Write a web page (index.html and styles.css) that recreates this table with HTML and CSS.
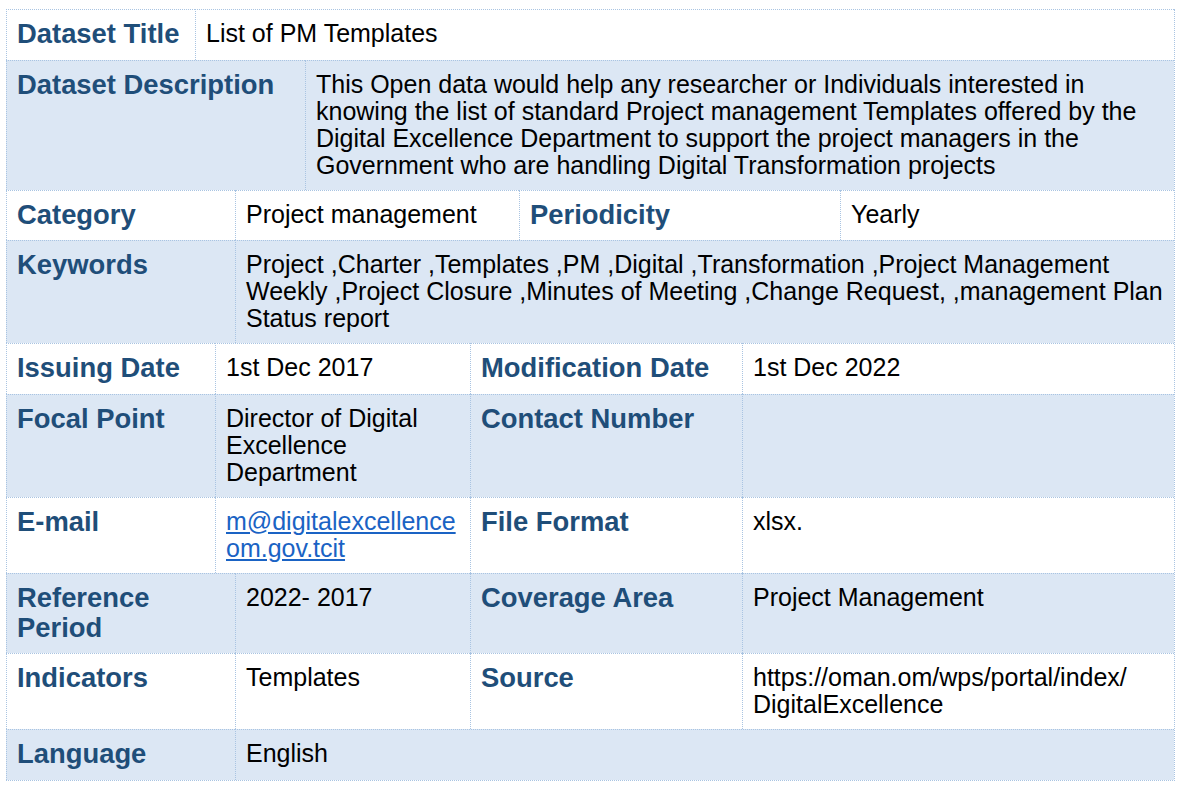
FILE: index.html
```html
<!DOCTYPE html>
<html lang="en">
<head>
<meta charset="utf-8">
<title>List of PM Templates</title>
<link rel="stylesheet" href="styles.css">
</head>
<body>
<div class="sheet">
  <div class="row r-title">
    <div class="cell label">Dataset Title</div>
    <div class="cell value">List of PM Templates</div>
  </div>
  <div class="row r-desc alt">
    <div class="cell label">Dataset Description</div>
    <div class="cell value">This Open data would help any researcher or Individuals interested in knowing the list of standard Project management Templates offered by the Digital Excellence Department to support the project managers in the Government who are handling Digital Transformation projects</div>
  </div>
  <div class="row r-cat">
    <div class="cell label">Category</div>
    <div class="cell value">Project management</div>
    <div class="cell label">Periodicity</div>
    <div class="cell value">Yearly</div>
  </div>
  <div class="row r-wide alt">
    <div class="cell label">Keywords</div>
    <div class="cell value">Project ,Charter ,Templates ,PM ,Digital ,Transformation ,Project Management Weekly ,Project Closure ,Minutes of Meeting ,Change Request, ,management Plan Status report</div>
  </div>
  <div class="row r-four-a">
    <div class="cell label">Issuing Date</div>
    <div class="cell value">1st Dec 2017</div>
    <div class="cell label">Modification Date</div>
    <div class="cell value">1st Dec 2022</div>
  </div>
  <div class="row r-four-a alt">
    <div class="cell label">Focal Point</div>
    <div class="cell value">Director of Digital Excellence Department</div>
    <div class="cell label">Contact Number</div>
    <div class="cell value"></div>
  </div>
  <div class="row r-four-a">
    <div class="cell label">E-mail</div>
    <div class="cell value"><a class="mail" href="#">m@digitalexcellence<br>om.gov.tcit</a></div>
    <div class="cell label">File Format</div>
    <div class="cell value">xlsx.</div>
  </div>
  <div class="row r-four-b alt">
    <div class="cell label">Reference Period</div>
    <div class="cell value">2022- 2017</div>
    <div class="cell label">Coverage Area</div>
    <div class="cell value">Project Management</div>
  </div>
  <div class="row r-four-b">
    <div class="cell label">Indicators</div>
    <div class="cell value">Templates</div>
    <div class="cell label">Source</div>
    <div class="cell value">https://oman.om/wps/portal/index/<wbr>DigitalExcellence</div>
  </div>
  <div class="row r-wide alt">
    <div class="cell label">Language</div>
    <div class="cell value">English</div>
  </div>
</div>
</body>
</html>
```

FILE: styles.css
```css
html, body {
  margin: 0;
  padding: 0;
  background: #ffffff;
}

body {
  font-family: "Liberation Sans", Arial, Helvetica, sans-serif;
  color: #000000;
}

.sheet {
  margin: 9px 0 0 6px;
  width: 1169px;
  box-sizing: border-box;
  border-right: 1px dotted #a9c4e2;
  border-bottom: 1px dotted #a9c4e2;
}

.row {
  display: grid;
}

.row.alt {
  background: #dce7f4;
}

.r-title { grid-template-columns: 189px 1fr; }
.r-desc { grid-template-columns: 299px 1fr; }
.r-cat { grid-template-columns: 229px 284px 321px 1fr; }
.r-wide { grid-template-columns: 229px 1fr; }
.r-four-a { grid-template-columns: 209px 255px 272px 1fr; }
.r-four-b { grid-template-columns: 229px 235px 272px 1fr; }

.cell {
  border-top: 1px dotted #a9c4e2;
  border-left: 1px dotted #a9c4e2;
  padding-left: 10px;
  padding-right: 6px;
  min-width: 0;
}

.label {
  padding-top: 9px;
  padding-bottom: 10.5px;
  font-size: 27.4px;
  line-height: 30px;
  font-weight: 700;
  color: #1f4e79;
}

.value {
  padding-top: 10px;
  padding-bottom: 11px;
  font-size: 25px;
  line-height: 27px;
}

.mail {
  color: #1a63c4;
  text-decoration: underline;
  text-underline-offset: 2px;
}
```
